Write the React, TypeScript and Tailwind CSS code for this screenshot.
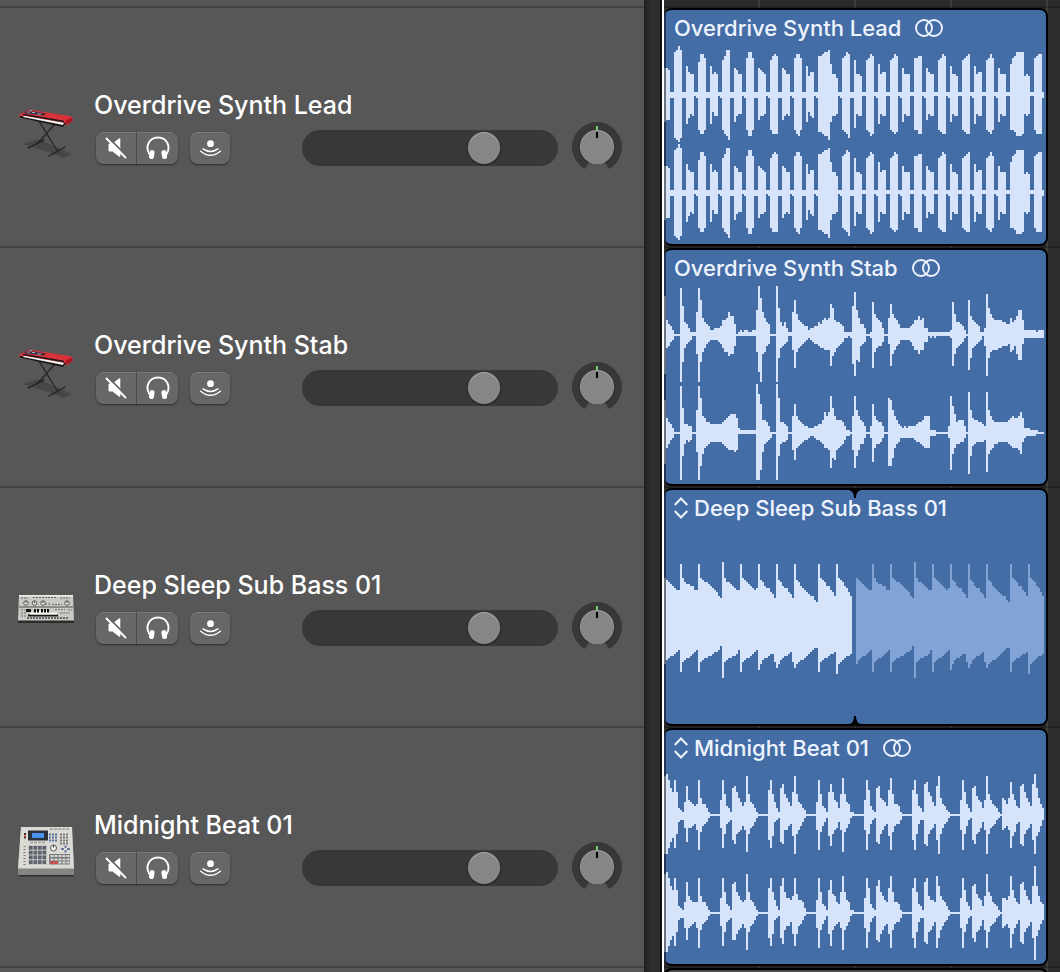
import React from "react";

/* Each chunk: start column, peak heights above the axis, peak heights below it (base 36, one character per column). */
type Chunk = [number, string, string];

const UNIT = 2;

const LEAD: Chunk[] = [
  [0, "ddc11", "edd22"], [5, "lmom11", "mnom22"], [11, "ebaa11", "fcab12"], [17, "gkki11", "ikki22"],
  [23, "eaba11", "f9bb12"], [29, "hjmm11", "ikln22"], [35, "dcaa11", "ebaa12"], [41, "illi11", "illi22"],
  [47, "dcba11", "dbba12"], [53, "hjkj11", "ikkk22"], [59, "dcaa11", "dbab12"], [65, "ikki11", "ikli22"],
  [71, "e9bb11", "e9bc12"], [77, "jjkllmfaa811", "jjkllnebba12"], [89, "ijlk11", "ijkm22"],
  [95, "haa911", "habb11"], [101, "hikj11", "ijlk12"], [107, "fabb11", "fabb11"], [113, "hikj11", "ijkj12"],
  [119, "daaa11", "eabb11"], [125, "iijj11", "iikk12"], [131, "dbaa11", "dabb11"], [137, "hikj11", "ijkk12"],
  [143, "eaa911", "eabb11"], [149, "hijk11", "ijkk12"], [155, "eabb11", "fabb11"], [161, "hiki11", "ijki12"],
  [167, "daaa11", "eabb11"], [173, "fijllll9a911", "iijlllkaba11"], [185, "ijkk1", "ikkk2"],
];

const STAB_L: Chunk[] = [
  [0, "j7542", "k7643"], [8, "ne653111", "oe754311"], [16, "bnh8654223334778b995", "aoe9754333345799baa6"],
  [37, "121221122", "111111111"], [46, "coib865", "9joa965"], [56, "od646311", "oc765411"],
  [64, "bha7654423344657878fd76654111", "8h97654323455677888gb9765422"],
  [93, "1elc8553", "2flde654"], [103, "1ga8763", "2h97664"], [112, "8fa8753333345779783", "5ga865333334688a884"],
  [131, "3111111111112ga66542", "4121211111112ga76542"], [152, "h976541", "ic76543"],
  [159, "13kda877776655867", "16lc98887766659866"], [176, "9cc7222222122", "add5222222222"], [189, "2", "2"],
];

const STAB_R: Chunk[] = [
  [0, "g7542", "g8643"], [8, "nc443300", "oc645411"], [16, "bnh8755444444567899975", "aohb876555555678999a95"],
  [37, "211111111", "111111111"], [46, "oje665300", "ooja654311"], [56, "oh55430", "oc65541"],
  [64, "8e86543322233446a8aic866653", "9e87654432234456889ide98764"], [91, "11", "22"],
  [94, "8ib8653", "9ic9663"], [103, "3e86553", "3f86653"], [112, "hgb8643232333345568884", "hhd8653333333455678883"],
  [133, "111", "222"], [142, "3id956663", "3jb866553"], [152, "kb766554", "lc765555"],
  [160, "3kb865555555678778a722211110", "4kb986655555678889b532222211"],
];

const BASS: Chunk[] = [
  [0, "lkjihgff", "mkjiihgf"], [8, "sljiihhff", "qlkjjihgf"], [17, "slkjjihgfecb", "qlkjjiihggfd"],
  [29, "tljjihgff", "tlkjjiihf"], [38, "slkjihgfg", "qlkjjihgf"], [47, "skjhggedb", "pmkjjihhl"],
  [56, "skjhggedb", "omkjiihgl"], [65, "skjhgfedcca9", "omlkkjihgfee"], [77, "slkjhhfec", "qlkjjihhg"],
  [86, "slkjhgec", "rmlkjiih"],
];

const BEAT_L: Chunk[] = [
  [0, "jkhdbhb321", "kkhecha433"], [10, "6e7654", "7e7765"], [16, "5h85531", "8i96542"],
  [28, "7ha431", "7ha543"], [34, "deb864", "dfa986"], [40, "6ja6531", "8ja7642"],
  [52, "cha631", "dhb432"], [58, "dfa864", "ef8865"], [64, "bja6532", "bka8642"],
  [76, "6ha431", "8i9642"], [82, "bfb763", "bga874"], [88, "aia6511", "8j97521"],
  [100, "7hc421", "8ia532"], [106, "de8764", "efa865"], [112, "cia5541", "bi96553"],
  [124, "cha431", "dia533"], [130, "fgb964", "fga875"], [136, "ej85421", "dka7542"],
  [148, "7hb531", "8ia632"], [154, "de9763", "dfa974"], [160, "7ja75431", "8ka76532"],
  [169, "8758ga743", "8768hb954"], [178, "efb864", "fga875"], [184, "fkd853", "dkb963"],
];

const BEAT_R: Chunk[] = [
  ...BEAT_L,
  [10, "5f8655", "8e8765"], [34, "efa865", "eeb986"], [58, "dha776", "dg9775"], [64, "8h96652", "bhb7642"],
  [83, "g9854", "h9765"], [107, "ga865", "fb976"], [130, "fh8665", "fga975"], [136, "id86531", "id97542"],
  [160, "8ja85431", "9ia76532"], [169, "7768ib754", "8768ib864"], [184, "dnd854", "doc964"],
];

function wavePath(chunks: Chunk[], axis: number, columns: number, floorUp: number, floorDown: number) {
  const up = new Array<number>(columns).fill(floorUp);
  const down = new Array<number>(columns).fill(floorDown);
  for (const [start, ups, downs] of chunks) {
    for (let i = 0; i < ups.length && start + i < columns; i++) {
      up[start + i] = parseInt(ups[i], 36);
      down[start + i] = Math.max(1, parseInt(downs[i] ?? "1", 36));
    }
  }
  let d = "";
  for (let i = 0; i < columns; i++) {
    d += `M${i * UNIT} ${axis - up[i] * UNIT}h${UNIT}v${(up[i] + down[i]) * UNIT}h-${UNIT}z`;
  }
  return d;
}

function Wave({ children }: { children: React.ReactNode }) {
  return (
    <svg viewBox="0 0 382 202" className="block h-[202px] w-[382px]" shapeRendering="crispEdges" aria-hidden="true">
      {children}
    </svg>
  );
}

function StereoWave({ left, right, floor }: { left: Chunk[]; right: Chunk[]; floor: [number, number] }) {
  return (
    <Wave>
      <path fill="#d5e4fb" d={wavePath(left, 52, 190, floor[0], floor[1])} />
      <path fill="#d5e4fb" d={wavePath(right, 150, 190, floor[0], floor[1])} />
    </Wave>
  );
}

function BassWave() {
  const d = wavePath(BASS, 98, 94, 0, 1);
  return (
    <Wave>
      <path fill="#d5e4fb" d={d} />
      <path fill="#81a3d6" d={d} transform="translate(192 0)" />
    </Wave>
  );
}

function SynthIcon() {
  return (
    <svg viewBox="0 2 56 64" className="h-16 w-14" aria-hidden="true">
      <path d="M4 48 20 43 54 58 46 62 27 55z" fill="#444" opacity=".8" />
      <g stroke="#262626" strokeWidth="1.400" strokeLinecap="round" fill="none">
        <path d="M21 25 40 56M37 28 19 48M10 52 26 44M31 60 47 51" />
      </g>
      <path d="M1 19 10 13.500 52 20Q55 21 54.500 25L49 29 1 20z" fill="#d8323a" />
      <path d="M48 24 54.500 21.500 54.500 25 48 29z" fill="#a5191f" />
      <path d="M2 20 48 27 45 31 2 21.500z" fill="#1a1113" />
      <path d="M6 19.800 46 26.800 45 29 5 21z" fill="#f6f1f1" />
      <path d="M5 18.500 46 25.500" stroke="#1b1719" strokeWidth="1.600" />
      <path d="M9 14.500 28 17.500 26 19.500 6 17z" fill="#35313f" />
      <path d="M9 16h3M14 16.500h3M19 18h4M12 14.800h2" stroke="#9fb4d8" strokeWidth="1" />
    </svg>
  );
}

function BassLineIcon() {
  return (
    <svg viewBox="0 1 56 64" className="h-16 w-14" aria-hidden="true">
      <path d="M0 43h56v3H0z" fill="#2b2b2b" />
      <path d="M1 18h54l1 25.500H0z" fill="#c9c9c5" />
      <path d="M1 18h54v1.500H1z" fill="#ecece8" />
      <path d="M1 29.500h54v1H1z" fill="#55554f" />
      <path d="M3 21h7M15 20.500h24M42 21h10M27 27h6M34 27.500h10" stroke="#65655f" strokeWidth="1" strokeDasharray="2 1" />
      <g fill="#e8e8e4" stroke="#5a5a56" strokeWidth="1">
        <circle cx="8" cy="26" r="2.300" /><circle cx="16.500" cy="26" r="2.300" /><circle cx="25" cy="26" r="2.300" /><circle cx="49" cy="26" r="2.300" />
      </g>
      <path d="M8 24.500v1.500M16.500 24.500v1.500M25 24.500v1.500M49 24.500v1.500" stroke="#222" />
      <path d="M8 32h5v3H8z" fill="#111" />
      <path d="M16 34h15v5H16z" fill="#f3f3ef" />
      <path d="M17 32v4M20 32v4M24 32v4M27 32v4M30 32v4" stroke="#111" strokeWidth="2" />
      <path d="M10 37.500h30v2H10z" fill="#191919" />
      <path d="M12 36.500h27" stroke="#f8f8f4" strokeWidth="2" />
      <path d="M37 32.500h10M42 36h10M3 33h4M3 36h5M3 39h5M50 33h4" stroke="#6f6f69" strokeDasharray="2 1" />
      <path d="M9 41h41" stroke="#6b6b66" strokeWidth="2" strokeDasharray="2 1" />
    </svg>
  );
}

function DrumPadIcon() {
  const pads = [0, 1, 2, 3];
  return (
    <svg viewBox="0 2 56 64" className="h-16 w-14" aria-hidden="true">
      <path d="M1 58h55v2.500H1z" fill="#303030" />
      <path d="M3 11h51l2 42v6H0v-6z" fill="#858585" />
      <path d="M3 11h51l2 41.500H0z" fill="#dcdad4" />
      <path d="M10 14.500h20v10H10z" fill="#2a3139" />
      <path d="M14 17h12v5H14z" fill="#4a92f2" />
      <path d="M7 17v2M7 21v1.500" stroke="#333" strokeWidth="2" />
      <path d="M7 19.500v1.500" stroke="#d73535" strokeWidth="2" />
      <path d="M12 26.500h16M32 13h20" stroke="#aaa" strokeWidth="2" strokeDasharray="3 1" />
      <path d="M31 18.500h8M31 21.500h8M31 24.500h8" stroke="#5370a0" strokeWidth="2" strokeDasharray="2 1" />
      <path d="M42 18.500h9M42 21.500h9M42 24.500h9M42 27.500h9" stroke="#777" strokeWidth="2" strokeDasharray="2 1" />
      <circle cx="35.500" cy="32" r="3" fill="#f5f5f5" stroke="#555" />
      <path d="M35.500 29.500v2" stroke="#333" />
      <path d="M43 33h3M49 33h3M47.500 29.500v2.500M47.500 34v2.500" stroke="#68789d" strokeWidth="2" />
      <path d="M6.500 30v20" stroke="#777" strokeWidth="2" strokeDasharray="1 2" />
      <path d="M10 29h19v20H10z" fill="#c3c5c7" />
      {pads.map((r) => pads.map((c) => (
        <rect key={`${r}-${c}`} x={11 + c * 4.5} y={30 + r * 4.75} width="3.600" height="3.700" fill="#5c636a" />
      )))}
      <path d="M31 38h21v10.500H31z" fill="#77797b" />
      <path d="M32.500 40h19M32.500 43.500h19M32.500 46.500h19" stroke="#d9d9d6" strokeWidth="2" strokeDasharray="3 1" />
      <path d="M32.500 46.500h3M36.500 46.500h3" stroke="#d32f2f" strokeWidth="2.400" />
    </svg>
  );
}

function MuteGlyph() {
  return (
    <svg viewBox="0 0 22 22" className="size-[22px]" aria-hidden="true">
      <path d="M3.500 7.500q0-1 1-1H7.500l6.500-5q1.300-.8 1.300.6v16.800q0 1.400-1.300.6L7.500 14.500H4.500q-1 0-1-1z" fill="#fff" />
      <path d="M2.800 0 22 19.200" stroke="#676767" strokeWidth="1.800" />
      <path d="M1.500 1.500 20.500 20.500" stroke="#fff" strokeWidth="1.800" strokeLinecap="round" />
    </svg>
  );
}

function HeadphonesGlyph() {
  return (
    <svg viewBox="0 0 24 24" className="size-6" aria-hidden="true">
      <path d="M3.600 18.500C1.200 14.500 1 10.500 2.400 7.500 4.100 3.600 7.600 1.500 12 1.500s7.900 2.100 9.600 6c1.400 3 1.200 7-1.200 11" fill="none" stroke="#fff" strokeWidth="1.900" />
      <rect x="3.300" y="14" width="5" height="9" rx="2.300" fill="#fff" transform="rotate(10 5.600 18.300)" />
      <rect x="15.700" y="14" width="5" height="9" rx="2.300" fill="#fff" transform="rotate(-10 18.400 18.300)" />
    </svg>
  );
}

function MonitorGlyph() {
  return (
    <svg viewBox="0 0 24 24" className="size-6" aria-hidden="true">
      <circle cx="12.500" cy="7.700" r="3.400" fill="#fff" />
      <path d="M5 12.900q7.500 5.200 15 0M2.600 15.200q9.900 8.200 19.800 0" fill="none" stroke="#fff" strokeWidth="1.400" strokeLinecap="round" />
    </svg>
  );
}

function PanKnob({ track }: { track: string }) {
  return (
    <button type="button" aria-label={`Pan, ${track}`} className="ml-3.5 size-[50px] shrink-0 self-start">
      <svg viewBox="0 0 50 50" className="block size-[50px]" aria-hidden="true">
        <path d="M13 47A25 25 0 1 1 37 47L32 38H18z" fill="#383838" />
        <circle cx="25" cy="26" r="17.500" fill="#000" opacity=".3" />
        <path d="M18 39h14l3 7H15z" fill="#575757" />
        <circle cx="25" cy="25" r="17" fill="#a2a2a2" />
        <circle cx="25" cy="25.600" r="16.500" fill="#868686" />
        <path d="M24 4h2v4h-2z" fill="#72d276" />
        <path d="M24 10h2v6h-2z" fill="#000" />
      </svg>
    </button>
  );
}

const BUTTON = "flex h-8 items-center justify-center bg-[#676767]";
const RAISED = "shadow-[0_1px_2px_rgba(0,0,0,0.5),inset_0_1px_0_rgba(255,255,255,0.14)]";

function TrackHeader({ name, icon }: { name: string; icon: React.ReactNode }) {
  return (
    <section className="flex h-60 shrink-0 items-center gap-5 border-b-2 border-[#424242] pt-1.5 pr-[22px] pl-[18px]">
      {icon}
      <div>
        <h2 className="h-9 pt-px text-[25px] leading-9 font-medium whitespace-nowrap text-white">{name}</h2>
        <div className="flex h-[52px] items-center pl-0.5">
          <div className={`flex overflow-hidden rounded-lg ${RAISED}`}>
            <button type="button" aria-label={`Mute ${name}`} className={`${BUTTON} w-[41px] border-r border-[#4a4a4a] shadow-[inset_0_1px_0_rgba(255,255,255,0.14)]`}>
              <MuteGlyph />
            </button>
            <button type="button" aria-label={`Solo ${name}`} className={`${BUTTON} w-[41px] shadow-[inset_0_1px_0_rgba(255,255,255,0.14)]`}>
              <HeadphonesGlyph />
            </button>
          </div>
          <button type="button" aria-label={`Input monitoring ${name}`} className={`${BUTTON} ml-3 w-10 rounded-lg ${RAISED}`}>
            <MonitorGlyph />
          </button>
          <input
            type="range"
            min={0}
            max={127}
            defaultValue={94}
            aria-label={`Volume ${name}`}
            className="ml-[72px] h-9 w-64 appearance-none rounded-full bg-[#383838] [&::-webkit-slider-thumb]:size-8 [&::-webkit-slider-thumb]:appearance-none [&::-webkit-slider-thumb]:rounded-full [&::-webkit-slider-thumb]:bg-[#868686] [&::-webkit-slider-thumb]:shadow-[0_1px_2px_rgba(0,0,0,0.5),inset_0_1px_1px_rgba(255,255,255,0.3)]"
          />
          <PanKnob track={name} />
        </div>
      </div>
    </section>
  );
}

function LoopGlyph() {
  return (
    <svg viewBox="0 0 14 22" className="mr-1.5 h-[22px] w-3.5" fill="none" stroke="#eef4fe" strokeWidth="2" aria-hidden="true">
      <path d="M.7 8 7 1.500 13.300 8M.7 14 7 20.500 13.300 14" />
    </svg>
  );
}

function StereoGlyph() {
  return (
    <svg viewBox="0 0 28 18" className="ml-3.5 h-[18px] w-7" fill="none" stroke="#eef4fe" strokeWidth="1.900" aria-hidden="true">
      <circle cx="9" cy="9" r="8" />
      <circle cx="19" cy="9" r="8" />
    </svg>
  );
}

function LoopNotch({ className }: { className: string }) {
  return (
    <svg viewBox="0 0 12 9" className={`absolute left-[185px] h-[9px] w-3 ${className}`} aria-hidden="true">
      <path d="M0 0Q5 1 5 8H7Q7 1 12 0z" fill="#000" />
    </svg>
  );
}

type Track = { name: string; icon: React.ReactNode; loop: boolean; stereo: boolean; wave: React.ReactNode };

function Region({ track }: { track: Track }) {
  return (
    <div className="h-60 shrink-0 border-b-2 border-black/25">
      <article className="relative h-[238px] w-96 overflow-hidden rounded-lg border-y-2 border-r-2 border-black bg-[#446da6]">
        <h3 className="flex h-8 items-center pt-1 pl-2.5 text-[22px] leading-7 font-[450] whitespace-nowrap text-[#eef4fe]">
          {track.loop && <LoopGlyph />}
          {track.name}
          {track.stereo && <StereoGlyph />}
        </h3>
        {track.wave}
        {!track.stereo && <LoopNotch className="top-0" />}
        {!track.stereo && <LoopNotch className="bottom-0 rotate-180" />}
        <span className="absolute inset-y-0 left-0 w-0.5 bg-black/50" />
      </article>
    </div>
  );
}

const TRACKS: Track[] = [
  { name: "Overdrive Synth Lead", icon: <SynthIcon />, loop: false, stereo: true, wave: <StereoWave left={LEAD} right={LEAD} floor={[1, 2]} /> },
  { name: "Overdrive Synth Stab", icon: <SynthIcon />, loop: false, stereo: true, wave: <StereoWave left={STAB_L} right={STAB_R} floor={[0, 1]} /> },
  { name: "Deep Sleep Sub Bass 01", icon: <BassLineIcon />, loop: true, stereo: false, wave: <BassWave /> },
  { name: "Midnight Beat 01", icon: <DrumPadIcon />, loop: true, stereo: true, wave: <StereoWave left={BEAT_L} right={BEAT_R} floor={[0, 1]} /> },
];

export default function App() {
  return (
    <main className="flex h-screen overflow-hidden bg-[#2c2c2c] font-[Inter,'Liberation_Sans',sans-serif]">
      <div className="flex shrink-0 flex-col bg-[#575757]">
        <div className="h-2 shrink-0 border-b-2 border-[#424242]" />
        {TRACKS.map((t) => (
          <TrackHeader key={t.name} name={t.name} icon={t.icon} />
        ))}
      </div>
      <div className="w-[18px] shrink-0 border-r-2 border-[#101010] bg-linear-to-r from-[#202020] to-[#2d2d2d] to-40%" />
      <div className="w-0.5 shrink-0 bg-white" />
      <div className="flex min-w-0 flex-1 flex-col bg-[repeating-linear-gradient(90deg,transparent_0_94px,#404040_94px_96px)]">
        <div className="h-2 shrink-0 border-b-2 border-black/25" />
        {TRACKS.map((t) => (
          <Region key={t.name} track={t} />
        ))}
        <div className="h-60 w-96 shrink-0 rounded-lg border-2 border-black bg-[#4a4a4a]" />
      </div>
    </main>
  );
}
